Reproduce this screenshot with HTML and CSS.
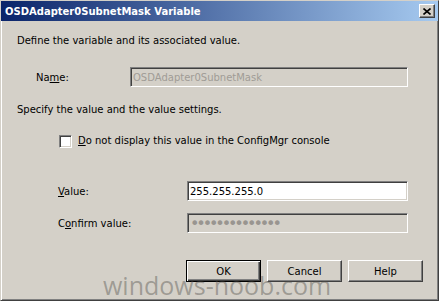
FILE: index.html
```html
<!DOCTYPE html>
<html lang="en">
<head>
  <meta charset="UTF-8" />
  <title>OSDAdapter0SubnetMask Variable</title>
  <link rel="stylesheet" href="styles.css">
</head>
<body>
  <!-- Dialog window -->
  <div class="window">
    <div class="titlebar">
      <span class="title">OSDAdapter0SubnetMask Variable</span>
      <button class="close" type="button" aria-label="Close">
        <svg width="8" height="7" viewBox="0 0 8 7">
          <path d="M0.5 0.5 L7.5 6.5 M7.5 0.5 L0.5 6.5" stroke="#000" stroke-width="1.6" fill="none"/>
        </svg>
      </button>
    </div>

    <div class="content">
      <p class="line">Define the variable and its associated value.</p>

      <div class="field name-field">
        <label for="name">Na<u>m</u>e:</label>
        <input type="text" id="name" value="OSDAdapter0SubnetMask" disabled />
      </div>

      <p class="line spec">Specify the value and the value settings.</p>

      <label class="check">
        <span class="box"></span>
        <span><u>D</u>o not display this value in the ConfigMgr console</span>
      </label>

      <div class="field value-field">
        <label for="value"><u>V</u>alue:</label>
        <input type="text" id="value" value="255.255.255.0" />
      </div>

      <div class="field value-field confirm">
        <label for="confirm">C<u>o</u>nfirm value:</label>
        <input type="password" id="confirm" value="25525525502550" disabled />
      </div>

      <div class="buttons">
        <button type="button" class="default">OK</button>
        <button type="button">Cancel</button>
        <button type="button">Help</button>
      </div>
    </div>

    <!-- Site watermark -->
    <div class="watermark">windows-noob.com</div>
  </div>
</body>
</html>
```

FILE: styles.css
```css
:root {
  --face: #d4d0c8;
  --shadow: #808080;
  --dark: #404040;
  --light: #ffffff;
  --ui-font: "DejaVu Sans", Verdana, sans-serif;
}

body {
  margin: 0;
  font-family: var(--ui-font);
  font-size: 10px;
  color: #000;
}

/* Window frame */
.window {
  position: relative;
  width: 439px;
  height: 301px;
  box-sizing: border-box;
  background: var(--face);
  border: 1px solid;
  border-color: var(--face) var(--dark) var(--dark) var(--face);
  box-shadow: inset 1px 1px var(--light), inset -1px -1px var(--shadow);
  overflow: hidden;
}

/* Title bar */
.titlebar {
  height: 20px;
  display: flex;
  align-items: center;
  justify-content: space-between;
  padding: 0 3px 0 4px;
  background: linear-gradient(to right, #0a246a, #a6caf0);
}

.title {
  color: #fff;
  font-weight: bold;
  font-size: 10px;
}

.close {
  width: 16px;
  height: 14px;
  padding: 0;
  display: flex;
  align-items: center;
  justify-content: center;
  background: var(--face);
  border: 1px solid;
  border-color: var(--light) var(--dark) var(--dark) var(--light);
  box-shadow: inset -1px -1px var(--shadow);
}

/* Dialog content */
.content {
  padding: 0 0 0 16px;
}

.line {
  margin: 13px 0 0;
  line-height: 14px;
}

.line.spec {
  margin-top: 16px;
}

.field {
  display: flex;
  align-items: center;
  margin-top: 19px;
}

.field label {
  box-sizing: border-box;
}

.name-field label {
  width: 94px;
  margin-left: 19px;
}

.value-field {
  margin-top: 33px;
}

.value-field.confirm {
  margin-top: 12px;
}

.value-field label {
  width: 129px;
  margin-left: 41px;
}

/* Sunken edit boxes */
input {
  height: 20px;
  box-sizing: border-box;
  margin: 0;
  padding: 0 2px;
  font-family: var(--ui-font);
  font-size: 10px;
  color: #000;
  background: #fff;
  border: 1px solid;
  border-color: var(--shadow) var(--light) var(--light) var(--shadow);
  box-shadow: inset 1px 1px var(--dark), inset -1px -1px var(--face);
  outline: none;
}

.name-field input {
  width: 278px;
}

.value-field input {
  width: 221px;
}

input:disabled {
  background: var(--face);
  color: #a09c96;
}

input[type="password"] {
  color: #999590;
  font-size: 16px;
  letter-spacing: -3.1px;
}

/* Checkbox */
.check {
  display: flex;
  align-items: center;
  gap: 6px;
  margin: 17px 0 0 42px;
  line-height: 14px;
}

.box {
  width: 13px;
  height: 13px;
  box-sizing: border-box;
  background: #fff;
  border: 1px solid;
  border-color: var(--shadow) var(--light) var(--light) var(--shadow);
  box-shadow: inset 1px 1px var(--dark), inset -1px -1px var(--face);
}

/* Push buttons */
.buttons {
  display: flex;
  gap: 6px;
  margin: 27px 0 0 169px;
}

.buttons button {
  width: 75px;
  height: 22px;
  padding: 0;
  font-family: var(--ui-font);
  font-size: 10px;
  color: #000;
  background: var(--face);
  border: 1px solid;
  border-color: var(--light) var(--dark) var(--dark) var(--light);
  box-shadow: inset -1px -1px var(--shadow);
}

.buttons button.default {
  border-color: #000;
  box-shadow: inset 1px 1px var(--light), inset -1px -1px var(--dark), inset -2px -2px var(--shadow);
}

/* Watermark over the dialog */
.watermark {
  position: absolute;
  left: 102px;
  top: 272px;
  font-family: "Open Sans", sans-serif;
  font-size: 25px;
  line-height: 1;
  color: rgba(80, 78, 74, 0.42);
  pointer-events: none;
}
```
